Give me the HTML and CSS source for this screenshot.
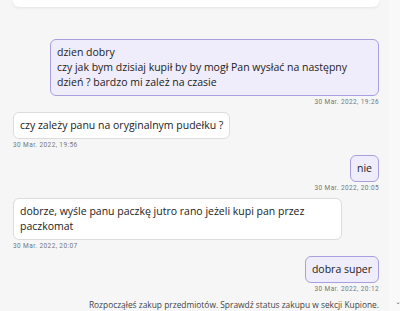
FILE: index.html
```html
<!DOCTYPE html>
<html lang="pl">
<head>
<meta charset="utf-8">
<meta name="viewport" content="width=device-width, initial-scale=1.0">
<title>Wiadomości</title>
<link rel="stylesheet" href="styles.css">
</head>
<body>
<div class="page">
    <div class="chat">
        <div class="top-card"></div>
        <div class="thread">
            <div class="msg msg-out">
                <div class="bubble">dzien dobry<br>czy jak bym dzisiaj kupił by by mogł Pan wysłać na następny dzień ? bardzo mi zależ na czasie</div>
                <div class="time">30 Mar. 2022, 19:26</div>
            </div>
            <div class="msg msg-in">
                <div class="bubble">czy zależy panu na oryginalnym pudełku ?</div>
                <div class="time">30 Mar. 2022, 19:56</div>
            </div>
            <div class="msg msg-out">
                <div class="bubble">nie</div>
                <div class="time">30 Mar. 2022, 20:05</div>
            </div>
            <div class="msg msg-in">
                <div class="bubble">dobrze, wyśle panu paczkę jutro rano jeżeli kupi pan przez paczkomat</div>
                <div class="time">30 Mar. 2022, 20:07</div>
            </div>
            <div class="msg msg-out">
                <div class="bubble">dobra super</div>
                <div class="time">30 Mar. 2022, 20:12</div>
            </div>
            <div class="notice">Rozpocząłeś zakup przedmiotów. Sprawdź status zakupu w sekcji Kupione.</div>
        </div>
    </div>
    <div class="side">
        <span class="caret">&#711;</span>
    </div>
</div>
</body>
</html>
```
FILE: styles.css
```css
* {
    box-sizing: border-box;
}
body {
    margin: 0;
    background: #f6f6f6;
    font-family: "Open Sans", "DejaVu Sans", sans-serif;
    color: #222;
}
.page {
    display: flex;
    height: 311px;
    overflow: hidden;
}
.chat {
    flex: 1;
    padding: 0 10px 0 13px;
}
.side {
    width: 11px;
    background: #f9f9f9;
    display: flex;
    align-items: flex-end;
    justify-content: flex-end;
}
.caret {
    font-size: 9px;
    color: #555;
    line-height: 1;
}
.top-card {
    height: 7px;
    background: #fff;
    border-radius: 0 0 6px 6px;
    box-shadow: 0 1px 3px rgba(0,0,0,0.08);
}
.thread {
    padding-top: 32px;
}
.msg {
    display: flex;
    flex-direction: column;
    margin-bottom: 6px;
}
.msg-out {
    align-items: flex-end;
}
.msg-in {
    align-items: flex-start;
}
.bubble {
    font-size: 10.5px;
    line-height: 15px;
    padding: 5px 6px;
    border-radius: 6px;
    background: #fff;
    border: 1px solid #dcdcdc;
    max-width: 329px;
}
.msg-out .bubble {
    background: #efedfb;
    border-color: #a99fe0;
}
.time {
    font-family: "Roboto", "DejaVu Sans", sans-serif;
    font-size: 6.5px;
    letter-spacing: 0.4px;
    color: #777;
    margin-top: 2px;
}
.notice {
    text-align: right;
    font-size: 8.4px;
    color: #444;
    white-space: nowrap;
}
```
